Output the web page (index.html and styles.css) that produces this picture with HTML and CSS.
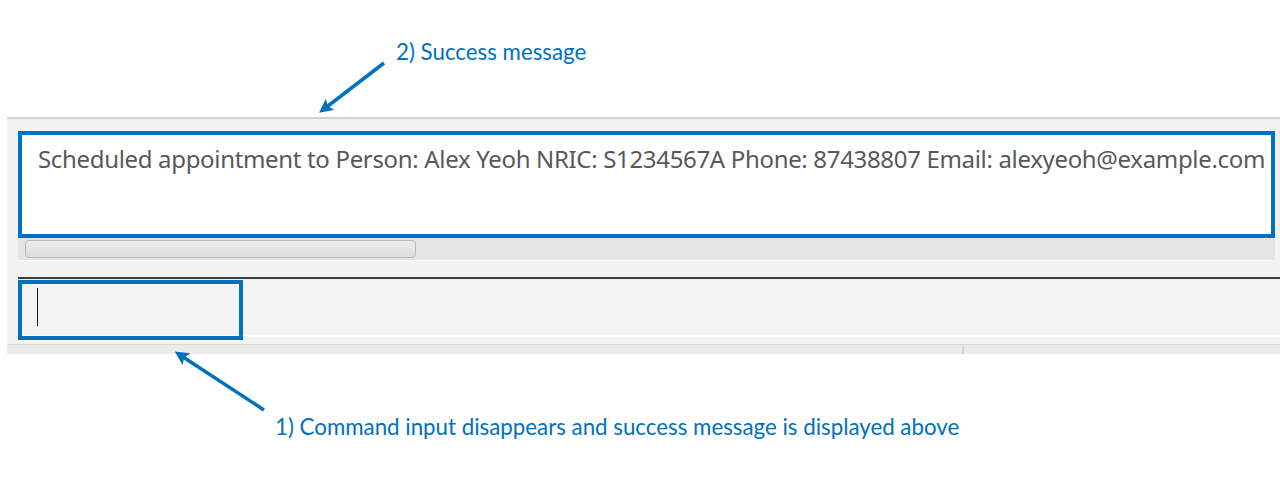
FILE: index.html
```html
<!DOCTYPE html>
<html>
<head>
<meta charset="utf-8">
<link rel="stylesheet" href="styles.css">
</head>
<body>
<div class="page">
  <div class="note note-top">2) Success message</div>
  <div class="window">
    <div class="result-area">
      <div class="result-box">
        <div class="result-text">Scheduled appointment to Person: Alex Yeoh NRIC: S1234567A Phone: 87438807 Email: alexyeoh@example.com</div>
      </div>
      <div class="hscroll"><div class="thumb"></div></div>
    </div>
    <div class="command-area">
      <div class="command-box"><span class="caret"></span></div>
    </div>
    <div class="status-bar">
      <div class="status-left"></div>
      <div class="status-right"></div>
    </div>
  </div>
  <div class="note note-bottom">1) Command input disappears and success message is displayed above</div>
  <svg class="arrows" width="1280" height="478" viewBox="0 0 1280 478">
    <defs>
      <marker id="head" markerWidth="4" markerHeight="4" refX="2.2" refY="2" orient="auto" markerUnits="strokeWidth">
        <path d="M0,0 L4,2 L0,4 L0.8,2 Z" fill="#0070c0"/>
      </marker>
    </defs>
    <line x1="384" y1="63" x2="324" y2="109" stroke="#0070c0" stroke-width="3.5" marker-end="url(#head)"/>
    <line x1="264" y1="410" x2="180" y2="355" stroke="#0070c0" stroke-width="3.5" marker-end="url(#head)"/>
  </svg>
</div>
</body>
</html>
```

FILE: styles.css
```css
html, body {
  margin: 0;
  padding: 0;
  background: #ffffff;
}
.page {
  position: relative;
  width: 1280px;
  height: 478px;
  overflow: hidden;
}
.note {
  font-family: Lato, "Open Sans", sans-serif;
  color: #0070c0;
  font-size: 22.3px;
  line-height: 24px;
}
.note-top {
  padding: 40px 0 0 396px;
  height: 77px;
}
.window {
  margin-left: 7px;
  background: #f2f2f2;
  border-top: 2px solid #d2d2d2;
}
.result-area {
  padding: 10px 0 0 11px;
}
.result-box {
  background: #fff;
  margin-right: 5px;
  height: 107px;
  box-sizing: border-box;
  border: 4px solid #0070c0;
  margin-top: 2px;
}
.result-text {
  font-family: "Noto Sans", "Open Sans", sans-serif;
  font-size: 24px;
  letter-spacing: -0.33px;
  color: #585858;
  padding: 9px 0 0 16px;
  white-space: nowrap;
  line-height: 30px;
}
.hscroll {
  height: 23px;
  background: #e4e4e4;
  margin-right: 5px;
  padding: 2px 0 0 7px;
  box-sizing: border-box;
  border-bottom: 1px solid #fafafa;
}
.thumb {
  width: 391px;
  height: 18px;
  border: 1px solid #b8b8b8;
  border-radius: 4px;
  background: linear-gradient(#ededed, #dcdcdc);
  box-sizing: border-box;
}
.command-area {
  padding: 16px 0 0 11px;
}
.command-box {
  border-top: 2px solid #3c3c3c;
  height: 60px;
  box-sizing: border-box;
  position: relative;
  background: #f3f3f3;
  border-bottom: 2px solid #fafafa;
}
.command-box::after {
  content: "";
  position: absolute;
  left: 0;
  top: 1px;
  width: 225px;
  height: 60px;
  box-sizing: border-box;
  border: 4px solid #0070c0;
}
.caret {
  position: absolute;
  left: 19px;
  top: 9px;
  width: 1px;
  height: 38px;
  background: #111;
}
.status-bar {
  margin-top: 7px;
  height: 9px;
  display: flex;
  border-top: 1px solid #d8d8d8;
  background: #ebebeb;
}
.status-left {
  width: 955px;
  border-right: 2px solid #d6d6d6;
}
.status-right {
  flex: 1;
}
.note-bottom {
  padding: 61px 0 0 275px;
}
.arrows {
  position: absolute;
  left: 0;
  top: 0;
  pointer-events: none;
}
```
